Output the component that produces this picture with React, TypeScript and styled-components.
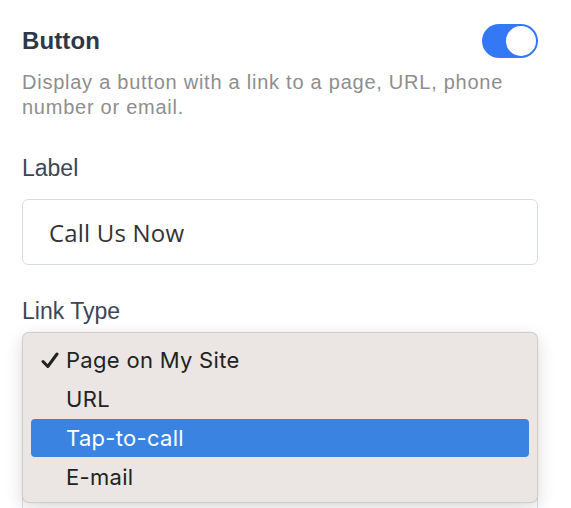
import React from "react";
import styled, { createGlobalStyle } from "styled-components";

const Global = createGlobalStyle`
  html, body { margin: 0; padding: 0; background: #ffffff; }
  body { font-family: "Liberation Sans", Arial, sans-serif; overflow: hidden; }
`;

const Panel = styled.div`
  width: 571px;
  height: 508px;
  padding: 24px 33px 0 22px;
  box-sizing: border-box;
  display: flex;
  flex-direction: column;
  overflow: hidden;
`;

const Header = styled.div`
  display: flex;
  align-items: center;
  justify-content: space-between;
  height: 34px;
`;

const Title = styled.h2`
  margin: 0;
  font-size: 24px;
  font-weight: 700;
  color: #2d3748;
  letter-spacing: 0.1px;
`;

const Toggle = styled.div<{ $on: boolean }>`
  width: 56px;
  height: 34px;
  border-radius: 17px;
  background: ${(p) => (p.$on ? "#3478f6" : "#cbd5e0")};
  display: flex;
  align-items: center;
  justify-content: ${(p) => (p.$on ? "flex-end" : "flex-start")};
  padding: 0 2px;
  box-sizing: border-box;
`;

const Knob = styled.div`
  width: 30px;
  height: 30px;
  border-radius: 50%;
  background: #ffffff;
`;

const Description = styled.p`
  margin: 12px 0 0;
  font-size: 20px;
  line-height: 25px;
  letter-spacing: 0.75px;
  color: #8e8e8e;
  padding-right: 0;
`;

const FieldLabel = styled.label<{ $top: number }>`
  display: block;
  margin-top: ${(p) => p.$top}px;
  font-size: 23px;
  line-height: 28px;
  color: #3c4657;
`;

const Box = styled.div<{ $top: number; $muted?: boolean }>`
  margin-top: ${(p) => p.$top}px;
  height: 66px;
  flex-shrink: 0;
  border: 1px solid #d6dde6;
  border-radius: 6px;
  box-sizing: border-box;
  display: flex;
  align-items: center;
  padding-left: 26px;
  font-family: "Open Sans", "Liberation Sans", sans-serif;
  font-size: 24px;
  letter-spacing: 0.2px;
  color: ${(p) => (p.$muted ? "#9aa3ae" : "#333333")};
`;

const SelectWrap = styled.div`
  position: relative;
  margin-top: 10px;
  flex-shrink: 0;
`;

const Spacer = styled.div`
  height: 86px;
`;

const Popup = styled.ul`
  position: absolute;
  top: -3px;
  left: 0;
  right: 0;
  height: 171px;
  margin: 0;
  padding: 8px 8px 0;
  list-style: none;
  box-sizing: border-box;
  background: #ebe6e3;
  border: 1px solid rgba(0, 0, 0, 0.1);
  border-radius: 7px;
  box-shadow: 0 6px 18px rgba(0, 0, 0, 0.14), 0 0 2px rgba(0, 0, 0, 0.08);
  z-index: 2;
`;

const Option = styled.li<{ $active?: boolean }>`
  position: relative;
  height: 38px;
  margin-bottom: 1px;
  display: flex;
  align-items: center;
  padding-left: 35px;
  border-radius: 4px;
  font-family: Inter, "Liberation Sans", Arial, sans-serif;
  font-size: 22px;
  letter-spacing: 0.3px;
  background: ${(p) => (p.$active ? "#3a83e0" : "transparent")};
  color: ${(p) => (p.$active ? "#ffffff" : "#222222")};
`;

const Check = styled.svg`
  position: absolute;
  left: 10px;
  top: 11px;
  width: 18px;
  height: 17px;
`;

const options = ["Page on My Site", "URL", "Tap-to-call", "E-mail"];

export default function App() {
  return (
    <>
      <Global />
      <Panel>
        <Header>
          <Title>Button</Title>
          <Toggle $on>
            <Knob />
          </Toggle>
        </Header>
        <Description>
          Display a button with a link to a page, URL, phone number or email.
        </Description>
        <FieldLabel $top={34}>Label</FieldLabel>
        <Box $top={17}>Call Us Now</Box>
        <FieldLabel $top={32}>Link Type</FieldLabel>
        <SelectWrap>
          <Box $top={0} />
          <Spacer />
          <Box $top={0} $muted>
            Select a page
          </Box>
          <Popup>
            {options.map((o, i) => (
              <Option key={o} $active={i === 2}>
                {i === 0 && (
                  <Check viewBox="0 0 18 17">
                    <path
                      d="M2 9.5 L6.8 14.5 L16 2"
                      fill="none"
                      stroke="#222"
                      strokeWidth="3"
                      strokeLinecap="round"
                      strokeLinejoin="round"
                    />
                  </Check>
                )}
                {o}
              </Option>
            ))}
          </Popup>
        </SelectWrap>
      </Panel>
    </>
  );
}
